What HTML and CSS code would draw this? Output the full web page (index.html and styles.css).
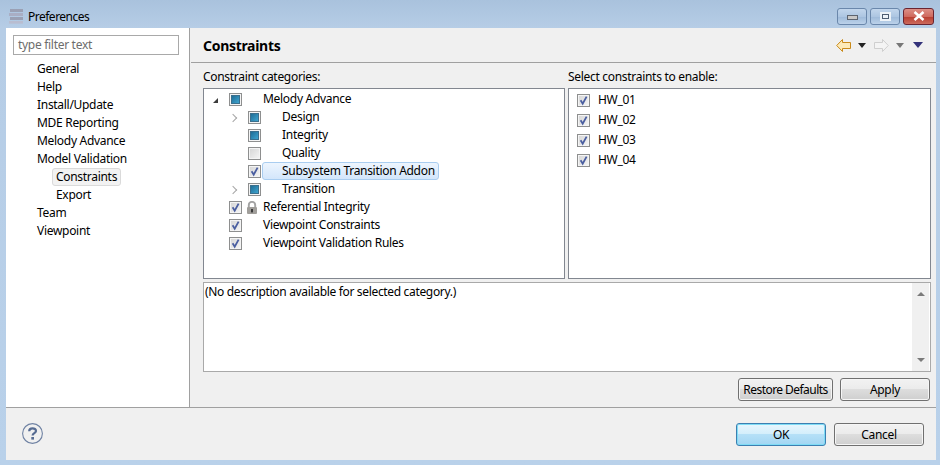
FILE: index.html
```html
<!DOCTYPE html>
<html lang="en">
<head>
    <meta charset="UTF-8">
    <title>Preferences</title>
    <link rel="stylesheet" href="styles.css">
</head>
<body>
    <svg class="defs" width="0" height="0">
        <symbol id="tick" viewBox="0 0 13 13">
            <path d="M3.6 6.2 L5.7 9.6 L9.6 2.6" fill="none" stroke="#4a5ea0" stroke-width="1.8"/>
        </symbol>
        <symbol id="arrow" viewBox="0 0 15 13">
            <path d="M6.5 .5 L.7 6.5 L6.5 12.5 V9.5 H14.5 V3.5 H6.5 Z"/>
        </symbol>
    </svg>
    <div class="window">
        <div class="titlebar">
            <svg class="app-icon" width="15" height="15" viewBox="0 0 15 15">
                <rect x="1" y="0" width="13" height="3" fill="#9aa0b4"/>
                <rect x="0" y="4" width="14" height="3" fill="#a9aec4"/>
                <rect x="1" y="8" width="13" height="3" fill="#9aa0b4"/>
                <rect x="0" y="12" width="14" height="2.6" fill="#b9bdd0"/>
            </svg>
            <span class="title">Preferences</span>
            <div class="win-buttons">
                <div class="win-btn win-min"><span class="min-glyph"></span></div>
                <div class="win-btn win-max"><span class="max-glyph"></span></div>
                <div class="win-btn win-close">
                    <svg width="12" height="10" viewBox="0 0 12 10">
                        <path d="M1.5 1 L10.5 9 M10.5 1 L1.5 9" stroke="#fff" stroke-width="2.6" fill="none"/>
                    </svg>
                </div>
            </div>
        </div>
        <div class="client">
            <div class="main">
                <div class="sidebar">
                    <div class="filter">type filter text</div>
                    <ul class="nav">
                        <li>General</li>
                        <li>Help</li>
                        <li>Install/Update</li>
                        <li>MDE Reporting</li>
                        <li>Melody Advance</li>
                        <li>Model Validation</li>
                        <li class="sub"><span class="nav-selected">Constraints</span></li>
                        <li class="sub"><span>Export</span></li>
                        <li>Team</li>
                        <li>Viewpoint</li>
                    </ul>
                </div>
                <div class="content">
                    <div class="page-head">
                        <h1>Constraints</h1>
                        <div class="toolbar">
                            <svg class="arrow-back" width="15" height="13"><use href="#arrow"/></svg>
                            <span class="caret caret-dark"></span>
                            <svg class="arrow-forward" width="15" height="13"><use href="#arrow"/></svg>
                            <span class="caret caret-grey"></span>
                            <span class="caret caret-blue"></span>
                        </div>
                    </div>
                    <div class="page-body">
                        <div class="columns">
                            <div class="column">
                                <div class="col-label">Constraint categories:</div>
                                <div class="box tree">
                                    <div class="node">
                                        <span class="twist-open"></span>
                                        <span class="check mixed"></span>
                                        <span class="slot"></span><span class="label">Melody Advance</span>
                                    </div>
                                    <div class="node child">
                                        <span class="twist-closed"></span>
                                        <span class="check mixed"></span>
                                        <span class="slot"></span><span class="label">Design</span>
                                    </div>
                                    <div class="node child">
                                        <span class="twist-none"></span>
                                        <span class="check mixed"></span>
                                        <span class="slot"></span><span class="label">Integrity</span>
                                    </div>
                                    <div class="node child">
                                        <span class="twist-none"></span>
                                        <span class="check"></span>
                                        <span class="slot"></span><span class="label">Quality</span>
                                    </div>
                                    <div class="node child">
                                        <span class="twist-none"></span>
                                        <span class="check"><svg width="13" height="13"><use href="#tick"/></svg></span>
                                        <span class="node-selected"><span class="slot"></span><span class="label">Subsystem Transition Addon</span></span>
                                    </div>
                                    <div class="node child">
                                        <span class="twist-closed"></span>
                                        <span class="check mixed"></span>
                                        <span class="slot"></span><span class="label">Transition</span>
                                    </div>
                                    <div class="node">
                                        <span class="twist-none"></span>
                                        <span class="check"><svg width="13" height="13"><use href="#tick"/></svg></span>
                                        <span class="slot">
                                            <svg class="lock" width="12" height="13" viewBox="0 0 12 13">
                                                <path d="M2.8 6 V4 a3.2 3.2 0 0 1 6.4 0 V6" fill="none" stroke="#a3a3a3" stroke-width="1.9"/>
                                                <rect x="1" y="6" width="10" height="7" rx="1" fill="#a09e9a"/>
                                                <rect x="5" y="8" width="2" height="3.4" fill="#3a3a3a"/>
                                            </svg>
                                        </span><span class="label">Referential Integrity</span>
                                    </div>
                                    <div class="node">
                                        <span class="twist-none"></span>
                                        <span class="check"><svg width="13" height="13"><use href="#tick"/></svg></span>
                                        <span class="slot"></span><span class="label">Viewpoint Constraints</span>
                                    </div>
                                    <div class="node">
                                        <span class="twist-none"></span>
                                        <span class="check"><svg width="13" height="13"><use href="#tick"/></svg></span>
                                        <span class="slot"></span><span class="label">Viewpoint Validation Rules</span>
                                    </div>
                                </div>
                            </div>
                            <div class="column">
                                <div class="col-label">Select constraints to enable:</div>
                                <div class="box list">
                                    <div class="list-row"><span class="check"><svg width="13" height="13"><use href="#tick"/></svg></span><span class="label">HW_01</span></div>
                                    <div class="list-row"><span class="check"><svg width="13" height="13"><use href="#tick"/></svg></span><span class="label">HW_02</span></div>
                                    <div class="list-row"><span class="check"><svg width="13" height="13"><use href="#tick"/></svg></span><span class="label">HW_03</span></div>
                                    <div class="list-row"><span class="check"><svg width="13" height="13"><use href="#tick"/></svg></span><span class="label">HW_04</span></div>
                                </div>
                            </div>
                        </div>
                        <div class="description">
                            <div class="desc-text">(No description available for selected category.)</div>
                            <div class="scrollbar">
                                <span class="scroll-up"></span>
                                <span class="scroll-down"></span>
                            </div>
                        </div>
                        <div class="page-actions">
                            <button class="btn btn-restore">Restore Defaults</button>
                            <button class="btn btn-apply">Apply</button>
                        </div>
                    </div>
                </div>
            </div>
            <div class="footer">
                <svg class="help" width="22" height="22" viewBox="0 0 22 22">
                    <circle cx="10.5" cy="10.5" r="9.9" fill="none" stroke="#6f82a3" stroke-width="1.1"/>
                    <path d="M7.2 8.2 C7.2 4.4 14 4.5 14 8 C14 10.2 10.6 10.2 10.6 12.6" fill="none" stroke="#566b92" stroke-width="2.2"/>
                    <rect x="9.3" y="14" width="2.7" height="2.6" fill="#566b92"/>
                </svg>
                <div class="footer-actions">
                    <button class="btn btn-ok">OK</button>
                    <button class="btn btn-cancel">Cancel</button>
                </div>
            </div>
        </div>
    </div>
</body>
</html>
```

FILE: styles.css
```css
* {
    box-sizing: border-box;
}
html, body {
    margin: 0;
    padding: 0;
}
body {
    width: 940px;
    height: 465px;
    overflow: hidden;
    font-family: "Noto Sans", sans-serif;
    font-size: 12px;
    letter-spacing: -.3px;
    color: #000;
}
.defs {
    position: absolute;
}
.window {
    width: 940px;
    height: 465px;
    display: flex;
    flex-direction: column;
    background: linear-gradient(#a9c2dd 0, #b6cde6 28px, #b9d1ea 100%);
}
.titlebar {
    height: 28px;
    flex: none;
    display: flex;
    align-items: center;
    padding-left: 9px;
}
.app-icon {
    margin: 4px 4px 0 0;
}
.title {
    letter-spacing: -.5px;
    margin-top: 5px;
}
.win-buttons {
    margin-left: auto;
    margin-right: 6px;
    margin-top: 4px;
    display: flex;
    gap: 3px;
}
.win-btn {
    height: 17px;
    border: 1px solid #6a87ab;
    border-radius: 3px;
    display: flex;
    align-items: center;
    justify-content: center;
    background: linear-gradient(#c2d6ec, #adc6e2 50%, #9db9d9 51%, #bcd2ea);
}
.win-min, .win-max {
    width: 30px;
}
.win-close {
    width: 31px;
    border-color: #6b2430;
    background: linear-gradient(#dc8f86, #cf6a5f 50%, #b83c2e 51%, #cc6a5c);
}
.min-glyph {
    width: 11px;
    height: 5px;
    background: #c8c8c8;
    border: 1px solid #5c6470;
    margin-top: 3px;
}
.max-glyph {
    width: 11px;
    height: 9px;
    border: 2px solid #eef3f8;
    outline: 1px solid #4f5e72;
    outline-offset: -3px;
    background: #eef3f8;
}
.client {
    flex: none;
    width: 930px;
    height: 432px;
    margin-left: 6px;
    background: #f0f0f0;
    display: flex;
    flex-direction: column;
}
.main {
    height: 380px;
    flex: none;
    display: flex;
    border-bottom: 1px solid #a0a0a0;
}
.sidebar {
    width: 184px;
    flex: none;
    background: #fff;
    border-right: 1px solid #a0a0a0;
    padding: 7px 0 0 7px;
}
.filter {
    width: 166px;
    height: 20px;
    border: 1px solid #a9a9a9;
    padding-left: 4px;
    line-height: 17px;
    color: #6d6d6d;
}
.nav {
    list-style: none;
    margin: 5px 0 0;
    padding: 0 0 0 24px;
}
.nav li {
    height: 18px;
    line-height: 18px;
    white-space: nowrap;
}
.nav li.sub {
    padding-left: 15px;
}
.nav li.sub span {
    display: inline-block;
    height: 18px;
    line-height: 16px;
    padding: 0 3px;
    border: 1px solid transparent;
}
.nav li.sub .nav-selected {
    background: #f2f2f2;
    border-color: #dadada;
    border-radius: 3px;
}
.content {
    flex: 1;
    display: flex;
    flex-direction: column;
}
.page-head {
    height: 35px;
    flex: none;
    margin-left: 1px;
    display: flex;
    align-items: center;
    padding-left: 12px;
    border-bottom: 1px solid #a0a0a0;
}
.page-head h1 {
    margin: 0;
    font-size: 14px;
    font-weight: bold;
}
.toolbar {
    margin-left: auto;
    margin-right: 13px;
    display: flex;
    align-items: center;
}
.arrow-back {
    fill: #fdeab8;
    stroke: #c98a1a;
    margin-right: 7px;
}
.arrow-forward {
    fill: #f4f4f4;
    stroke: #cfcfcf;
    margin: 0 7px 0 8px;
    transform: scaleX(-1);
}
.caret {
    width: 0;
    height: 0;
    border-style: solid;
    border-width: 5px 4px 0;
    border-color: transparent;
}
.caret-dark {
    border-top-color: #222;
}
.caret-grey {
    border-top-color: #777;
}
.caret-blue {
    border-width: 6px 5px 0;
    border-top-color: #33327a;
    margin-left: 9px;
}
.page-body {
    flex: 1;
    padding: 0 5px 0 13px;
    display: flex;
    flex-direction: column;
}
.columns {
    display: flex;
    gap: 3px;
    height: 216px;
    flex: none;
}
.column {
    width: 362px;
    display: flex;
    flex-direction: column;
}
.column + .column {
    width: 363px;
}
.col-label {
    height: 25px;
    line-height: 28px;
    flex: none;
    white-space: nowrap;
}
.box {
    flex: 1;
    background: #fff;
    border: 1px solid #828790;
}
.tree {
    padding: 1px 0 0 5px;
}
.node {
    height: 18px;
    display: flex;
    align-items: center;
    white-space: nowrap;
}
.node.child {
    padding-left: 19px;
}
.label {
    margin-top: -2px;
}
.twist-open, .twist-closed, .twist-none {
    width: 20px;
    flex: none;
    position: relative;
    height: 18px;
}
.twist-open::after {
    content: "";
    position: absolute;
    left: 4px;
    top: 8px;
    border-style: solid;
    border-width: 0 0 5px 5px;
    border-color: transparent transparent #3c3c3c;
}
.twist-closed::after {
    content: "";
    position: absolute;
    left: 2px;
    top: 7px;
    width: 5px;
    height: 5px;
    border-top: 1px solid #a6a6a6;
    border-right: 1px solid #a6a6a6;
    transform: rotate(45deg);
}
.check {
    width: 13px;
    height: 13px;
    flex: none;
    border: 1px solid #8e8f8f;
    background: linear-gradient(135deg, #d4d4d4, #f6f6f6);
    box-shadow: inset 0 0 0 1px #f4f4f4;
    position: relative;
    display: block;
}
.check svg {
    position: absolute;
    left: -1px;
    top: -1px;
}
.check.mixed {
    background: #f4f4f4;
}
.check.mixed::after {
    content: "";
    position: absolute;
    left: 2px;
    top: 2px;
    width: 7px;
    height: 7px;
    background: linear-gradient(135deg, #1f6d96, #3fa4cf);
    box-shadow: 0 0 0 1px #3b6f8c;
}
.slot {
    width: 21px;
    flex: none;
    display: flex;
    align-items: center;
    padding-left: 4px;
}
.node-selected {
    display: flex;
    align-items: center;
    height: 18px;
    margin-left: 1px;
    padding-right: 3px;
    border: 1px solid #a9cdf0;
    border-radius: 3px;
    background: linear-gradient(#edf5fe, #d3e6fb);
}
.node-selected .slot {
    width: 19px;
}
.list {
    padding: 1px 0 0 8px;
}
.list-row {
    height: 20px;
    display: flex;
    align-items: center;
}
.list-row .check {
    margin-right: 8px;
}
.description {
    height: 90px;
    flex: none;
    margin-top: 3px;
    background: #fff;
    border: 1px solid #a9a9a9;
    display: flex;
}
.desc-text {
    flex: 1;
    padding: 0 0 0 1px;
    line-height: 17px;
    letter-spacing: -.33px;
}
.scrollbar {
    width: 17px;
    flex: none;
    margin-right: 1px;
    background: #f0f0f0;
    display: flex;
    flex-direction: column;
    justify-content: space-between;
    align-items: center;
    padding: 9px 0;
}
.scroll-up, .scroll-down {
    width: 0;
    height: 0;
    border-style: solid;
    border-color: transparent;
    border-width: 0 4px 4px;
    border-bottom-color: #7a7a7a;
}
.scroll-down {
    border-width: 4px 4px 0;
    border-top-color: #7a7a7a;
}
.page-actions {
    margin-top: 6px;
    margin-right: 1px;
    display: flex;
    justify-content: flex-end;
    gap: 7px;
}
.btn {
    height: 23px;
    padding: 0;
    font: inherit;
    letter-spacing: inherit;
    white-space: nowrap;
    color: #000;
    border: 1px solid #707070;
    border-radius: 3px;
    background: linear-gradient(#f2f2f2, #ebebeb 48%, #dddddd 50%, #cfcfcf);
    box-shadow: inset 0 0 0 1px #f6f6f6;
}
.btn-restore {
    width: 95px;
    letter-spacing: -.55px;
}
.btn-apply {
    width: 90px;
}
.btn-ok, .btn-cancel {
    width: 90px;
}
.btn-ok {
    border-color: #3c7fb1;
    background: linear-gradient(#e8f6fd, #d3eefb 48%, #b5e0f7 50%, #a2d6f3);
    box-shadow: inset 0 0 0 1px #7fdcf5;
}
.footer {
    flex: 1;
    display: flex;
    align-items: flex-start;
    padding: 15px 12px 0 16px;
}
.footer-actions {
    margin-left: auto;
    display: flex;
    gap: 8px;
}
```
